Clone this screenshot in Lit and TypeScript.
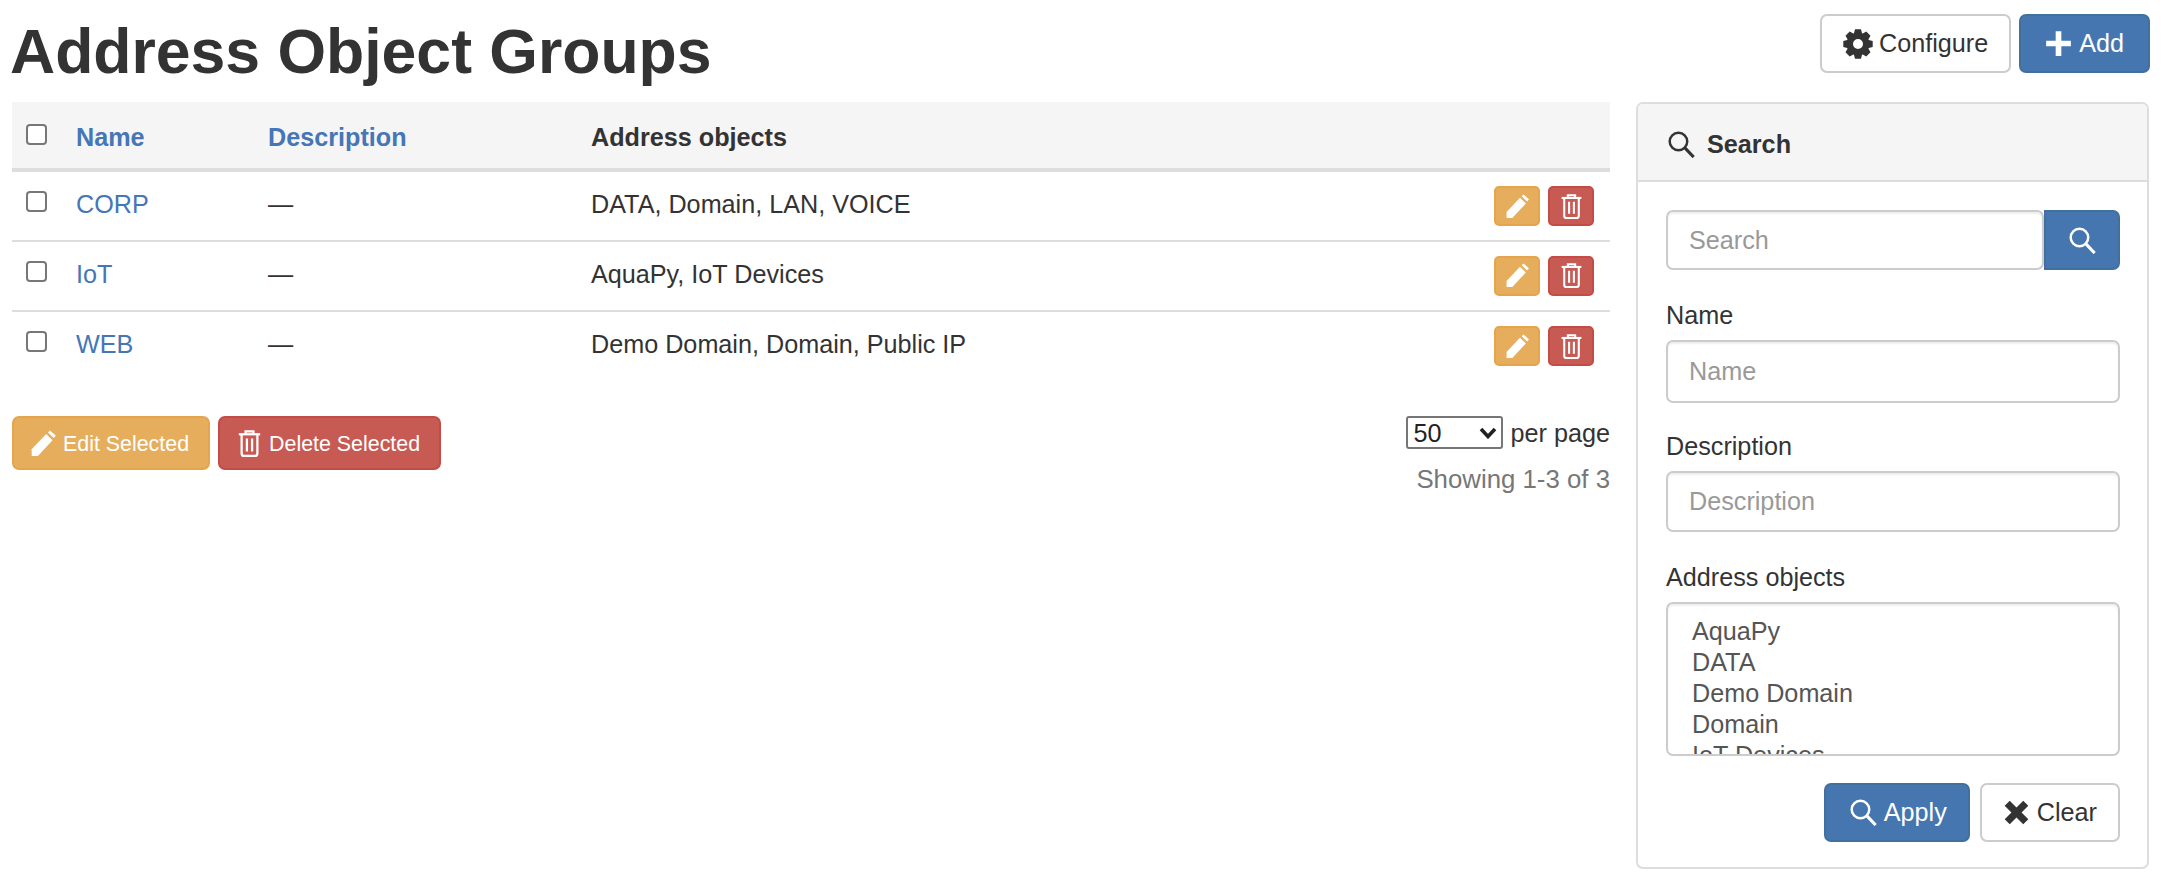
// app.ts
import { css, html, LitElement } from 'lit';
import { customElement } from 'lit/decorators.js';

// chunky eight tooth cog, the outline is computed so the teeth stay even
const gearPath = () => {
  const pts: string[] = [];
  for (let i = 0; i < 8; i++) {
    const a = (i * Math.PI) / 4;
    const corners: [number, number][] = [[9.2, -0.36], [12, -0.2], [12, 0.2], [9.2, 0.36]];
    for (const [r, d] of corners) {
      pts.push(`${(12 + r * Math.cos(a + d)).toFixed(2)} ${(12 + r * Math.sin(a + d)).toFixed(2)}`);
    }
  }
  return `M${pts.join('L')}ZM12 8a4 4 0 1 0 0 8a4 4 0 1 0 0-8Z`;
};

const pencil = html`<svg class="icon" viewBox="0 0 24 24" fill="currentColor"><path d="M1.5 23 1.5 17.2 14.4 3.6 20 9 7 23 Z"/><path d="M16 2.2 17.8 .4 23 5.2 21.2 7.2 Z"/></svg>`;
const trash = html`<svg class="icon" viewBox="0 0 24 24" fill="none" stroke="currentColor" stroke-width="2"><path d="M2.5 3.8H21.5"/><path d="M8.5 3.6V1.2H15.5V3.6"/><path d="M5 4V20.8Q5 23 7.2 23H16.8Q19 23 19 20.8V4"/><path d="M9.7 7.5V19M14.3 7.5V19"/></svg>`;
const search = html`<svg class="icon" viewBox="0 0 24 24" fill="none" stroke="currentColor" stroke-width="2.2"><circle cx="9.3" cy="9.3" r="7.8"/><path d="M15 15 22.8 23.2" stroke-width="2.7"/></svg>`;
const gear = html`<svg class="icon" viewBox="0 0 24 24" fill="currentColor"><path fill-rule="evenodd" d=${gearPath()}/></svg>`;
const plus = html`<svg class="icon" viewBox="0 0 24 24" fill="currentColor"><path d="M9.5 1H14.5V9.5H23V14.5H14.5V23H9.5V14.5H1V9.5H9.5Z"/></svg>`;
const remove = html`<svg class="icon" viewBox="0 0 24 24" fill="currentColor"><path d="M6 1.5 12 7.5 18 1.5 22.5 6 16.5 12 22.5 18 18 22.5 12 16.5 6 22.5 1.5 18 7.5 12 1.5 6Z"/></svg>`;
const chevron = html`<svg class="chevron" viewBox="0 0 18 12" fill="none" stroke="currentColor" stroke-width="3.6"><path d="M2 2 9 9.5 16 2"/></svg>`;

const rows = [
  { name: 'CORP', objects: 'DATA, Domain, LAN, VOICE' },
  { name: 'IoT', objects: 'AquaPy, IoT Devices' },
  { name: 'WEB', objects: 'Demo Domain, Domain, Public IP' },
];
const options = ['AquaPy', 'DATA', 'Demo Domain', 'Domain', 'IoT Devices', 'LAN', 'Public IP', 'VOICE'];

@customElement('app-root')
export class AppRoot extends LitElement {
  static styles = css`
    :host {
      display: block;
      font-family: "Liberation Sans", Arial, sans-serif;
      font-size: 25.2px;
      line-height: 33px;
      color: #333;
      background: #fff;
      height: 884px;
      overflow: hidden;
    }
    * { box-sizing: border-box; }
    .page { padding: 14px 18px 0 12px; }
    .top { display: flex; justify-content: space-between; align-items: flex-start; height: 88px; }
    h1 { margin: 0 0 0 -2px; font-size: 62.5px; line-height: 74px; font-weight: 700; }
    .top-actions { display: flex; gap: 8px; }
    .main { display: grid; grid-template-columns: 1598px 513px; gap: 26px; }

    .btn {
      display: inline-flex;
      align-items: center;
      justify-content: center;
      gap: 7px;
      height: 59px;
      padding: 0 21px;
      border: 2px solid #ccc;
      border-radius: 7px;
      background: #fff;
      color: #333;
      font: inherit;
      white-space: nowrap;
    }
    .icon { width: 27px; height: 27px; flex: none; display: block; }
    .primary { background: #4676b0; border-color: #41709f; color: #fff; }
    .warning { background: #e6ae5c; border-color: #e5a54e; color: #fff; }
    .danger { background: #c85a54; border-color: #c34c46; color: #fff; }
    .sm { height: 54px; padding: 1px 19px 0 16px; font-size: 21.4px; line-height: 28px; gap: 6px; }
    .xs { width: 46px; height: 40px; padding: 0; border-radius: 5px; }
    .xs .icon { width: 25px; height: 25px; }
    .cfg { gap: 6px; }
    .cfg .icon { width: 30px; height: 30px; }
    .add { padding: 0 24px; }
    .apply { padding: 0 21px 0 24px; }

    table { width: 100%; border-collapse: collapse; table-layout: fixed; }
    th, td { text-align: left; vertical-align: top; }
    th { height: 68px; padding: 19px 14px 0; background: #f5f5f5; border-bottom: 4px solid #ddd; font-weight: 700; }
    td { height: 70.7px; padding: 16px 14px 0; border-bottom: 2px solid #ddd; }
    tr:last-child td { border-bottom: 0; }
    .c-check { width: 50px; }
    .c-name { width: 192px; }
    .c-desc { width: 323px; }
    td.c-actions, th.c-actions { width: 140px; padding-left: 0; padding-right: 16px; }
    a { color: #4576b5; text-decoration: none; }
    th a { font-weight: 700; }
    input[type='checkbox'] {
      appearance: none;
      display: block;
      width: 21px;
      height: 21px;
      margin: 3px 0 0;
      border: 2px solid #777;
      border-radius: 4px;
      background: #fff;
    }
    .row-actions { display: flex; justify-content: flex-end; gap: 8px; margin-top: -2px; }

    .below { display: flex; justify-content: space-between; align-items: flex-start; margin-top: 34px; }
    .bulk { display: flex; gap: 8px; }
    .paging { text-align: right; }
    .per-page { display: flex; justify-content: flex-end; align-items: center; gap: 8px; height: 33px; }
    .per-page > span:last-child { padding-top: 2px; }
    .select-wrap { position: relative; display: block; width: 97px; height: 33px; color: #222; }
    .select-wrap select {
      appearance: none;
      display: block;
      width: 97px;
      height: 33px;
      padding: 0 0 0 6px;
      font-family: inherit;
      font-size: 25.2px;
      color: #222;
      background: #fff;
      border: 2px solid #767676;
      border-radius: 3px;
    }
    .chevron { position: absolute; right: 6px; top: 11px; width: 18px; height: 12px; pointer-events: none; }
    .showing { margin-top: 14px; color: #777; font-size: 25.8px; }

    .panel { height: 767px; border: 2px solid #ddd; border-radius: 7px; }
    .panel-head {
      display: flex;
      align-items: center;
      gap: 12px;
      height: 78px;
      padding: 5px 30px 0;
      background: #f5f5f5;
      border-bottom: 2px solid #ddd;
      border-radius: 5px 5px 0 0;
      font-weight: 700;
    }
    .panel-body { padding: 28px 27px 0 28px; }
    .search-group { display: flex; height: 60px; }
    .search-group input { flex: 1; min-width: 0; border-radius: 7px 0 0 7px; border-right: 0; }
    .search-group .btn { width: 76px; height: 60px; padding: 0; border-radius: 0 7px 7px 0; }
    input.text {
      width: 100%;
      height: 60px;
      padding: 0 21px;
      border: 2px solid #ccc;
      border-radius: 7px;
      background: #fff;
      font: inherit;
      color: #555;
      outline: 0;
      box-shadow: inset 0 2px 2px rgba(0, 0, 0, .07);
    }
    input.text::placeholder { color: #999; opacity: 1; }
    label { display: block; margin: 0 0 8px; color: #333; }
    .f-name { margin-top: 29px; }
    .f-name input.text { height: 63px; }
    .f-desc { margin-top: 27px; }
    .f-desc input.text { height: 61px; }
    .f-obj { margin-top: 29px; }
    select.list {
      display: block;
      width: 100%;
      height: 154px;
      padding: 12px 22px 0;
      border: 2px solid #ccc;
      border-radius: 7px;
      background: #fff;
      font-family: inherit;
      font-size: 25.2px;
      color: #555;
      outline: 0;
      overflow: hidden;
      scrollbar-width: none;
      box-shadow: inset 0 2px 2px rgba(0, 0, 0, .07);
    }
    select.list option { padding: 1px 2px; min-height: 31px; line-height: 29px; }
    .form-actions { display: flex; justify-content: flex-end; gap: 10px; margin-top: 27px; }
  `;

  render() {
    return html`
      <div class="page">
        <div class="top">
          <h1>Address Object Groups</h1>
          <div class="top-actions">
            <button class="btn cfg">${gear}Configure</button>
            <button class="btn primary add">${plus}Add</button>
          </div>
        </div>
        <div class="main">
          <div>
            <table>
              <thead>
                <tr>
                  <th class="c-check"><input type="checkbox" /></th>
                  <th class="c-name"><a>Name</a></th>
                  <th class="c-desc"><a>Description</a></th>
                  <th>Address objects</th>
                  <th class="c-actions"></th>
                </tr>
              </thead>
              <tbody>
                ${rows.map((r) => html`
                  <tr>
                    <td><input type="checkbox" /></td>
                    <td><a>${r.name}</a></td>
                    <td>—</td>
                    <td>${r.objects}</td>
                    <td class="c-actions">
                      <div class="row-actions">
                        <button class="btn warning xs">${pencil}</button>
                        <button class="btn danger xs">${trash}</button>
                      </div>
                    </td>
                  </tr>
                `)}
              </tbody>
            </table>
            <div class="below">
              <div class="bulk">
                <button class="btn warning sm">${pencil}Edit Selected</button>
                <button class="btn danger sm">${trash}Delete Selected</button>
              </div>
              <div class="paging">
                <div class="per-page">
                  <span class="select-wrap"><select><option>50</option></select>${chevron}</span>
                  <span>per page</span>
                </div>
                <div class="showing">Showing 1-3 of 3</div>
              </div>
            </div>
          </div>
          <aside class="panel">
            <div class="panel-head">${search}<span>Search</span></div>
            <div class="panel-body">
              <div class="search-group">
                <input class="text" placeholder="Search" />
                <button class="btn primary">${search}</button>
              </div>
              <div class="f-name">
                <label>Name</label>
                <input class="text" placeholder="Name" />
              </div>
              <div class="f-desc">
                <label>Description</label>
                <input class="text" placeholder="Description" />
              </div>
              <div class="f-obj">
                <label>Address objects</label>
                <select class="list" multiple>
                  ${options.map((o) => html`<option>${o}</option>`)}
                </select>
              </div>
              <div class="form-actions">
                <button class="btn primary apply">${search}Apply</button>
                <button class="btn">${remove}Clear</button>
              </div>
            </div>
          </aside>
        </div>
      </div>
    `;
  }
}
